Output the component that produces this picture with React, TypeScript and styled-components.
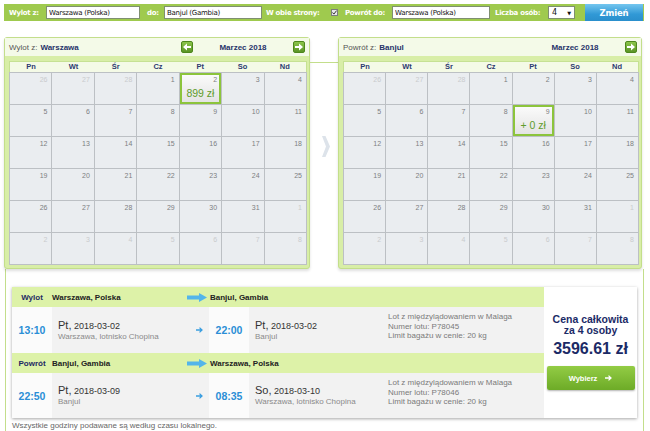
import React from "react";
import styled, { createGlobalStyle } from "styled-components";

const GlobalStyle = createGlobalStyle`
  html, body { margin: 0; padding: 0; background: #ffffff; }
  body { font-family: "Liberation Sans", Arial, sans-serif; }
  * { box-sizing: border-box; }
`;

const Page = styled.div`
  width: 650px;
  height: 431px;
  overflow: hidden;
  padding-top: 4px;
`;

/* ---------- search bar ---------- */
const SearchBar = styled.div`
  margin-left: 4px;
  width: 640px;
  height: 17px;
  padding-left: 5px;
  background: #9fca4e;
  display: flex;
  align-items: center;
  font-family: "DejaVu Sans", Verdana, sans-serif;
`;

const BarLabel = styled.span<{ $w: number; $pl?: number }>`
  flex: none;
  width: ${(p) => p.$w}px;
  padding-left: ${(p) => p.$pl ?? 0}px;
  color: #ffffff;
  font-size: 7px;
  font-weight: bold;
  letter-spacing: -0.3px;
  white-space: nowrap;
`;

const TextInput = styled.input<{ $w: number }>`
  flex: none;
  width: ${(p) => p.$w}px;
  height: 13px;
  margin: 0;
  padding: 0 0 0 2px;
  border: 1px solid #7f8f70;
  background: #ffffff;
  font-family: "DejaVu Sans", Verdana, sans-serif;
  font-size: 7px;
  letter-spacing: -0.25px;
  color: #111111;
  outline: none;
`;

const CheckBox = styled.span`
  flex: none;
  width: 7px;
  height: 7px;
  border: 1px solid #7c7c7c;
  background: #e9e9e9;
  display: flex;
  align-items: center;
  justify-content: center;
`;

const SelectBox = styled.span`
  flex: none;
  width: 27px;
  height: 13px;
  border: 1px solid #7f8f70;
  background: #ffffff;
  display: flex;
  align-items: center;
  justify-content: space-between;
  padding: 0 3px 0 3px;
  font-size: 8px;
  color: #111;
`;

const SelectCaret = styled.span`
  font-size: 5px;
  color: #111;
`;

const SubmitButton = styled.button`
  flex: none;
  margin-left: 10px;
  width: 58px;
  height: 17px;
  padding: 0;
  border: none;
  background: linear-gradient(#74c6ef, #3199d6 60%, #2a8fcc);
  color: #ffffff;
  font-family: "DejaVu Sans", Verdana, sans-serif;
  font-size: 8.5px;
  font-weight: bold;
  letter-spacing: -0.2px;
`;

/* ---------- calendars ---------- */
const CalRow = styled.div`
  display: flex;
  align-items: flex-start;
  margin-top: 16px;
  padding-left: 4px;
`;

const Panel = styled.section<{ $w: number }>`
  flex: none;
  width: ${(p) => p.$w}px;
  height: 232px;
  border: 1px solid #c3de8b;
  border-radius: 3px;
  background: #d8eea7;
  box-shadow: 0 2px 3px rgba(0, 0, 0, 0.13);
  display: flex;
  flex-direction: column;
`;

const PanelHead = styled.header`
  flex: none;
  height: 18px;
  padding: 0 4px;
  background: #f4fae8;
  display: flex;
  align-items: center;
  font-size: 8px;
  color: #555555;
`;

const HeadCity = styled.b`
  margin-left: 3px;
  color: #27336a;
`;

const MonthNav = styled.div`
  margin-left: auto;
  display: flex;
  align-items: center;
`;

const NavButton = styled.span<{ $hidden?: boolean }>`
  width: 12px;
  height: 12px;
  border: 1px solid #4d871c;
  border-radius: 2px;
  background: linear-gradient(#8cc54a, #5a9425);
  visibility: ${(p) => (p.$hidden ? "hidden" : "visible")};
  display: flex;
  align-items: center;
  justify-content: center;
`;

const MonthTitle = styled.span`
  width: 100px;
  text-align: center;
  font-size: 8px;
  font-weight: bold;
  color: #27336a;
`;

const PanelBody = styled.div`
  flex: 1;
  padding: 5px 2px 0 4px;
`;

const DayNames = styled.div`
  display: grid;
  grid-template-columns: repeat(7, 1fr);
  height: 11px;
  background: #f4fae6;
  border: 1px solid #c6e193;
  border-bottom: none;
`;

const DayName = styled.span`
  text-align: center;
  font-size: 7.5px;
  line-height: 10px;
  font-weight: bold;
  color: #2d3a70;
`;

const Grid = styled.div`
  display: grid;
  grid-template-columns: repeat(7, 1fr);
  grid-auto-rows: 32px;
  border-left: 1px solid #bcc0c4;
  border-top: 1px solid #bcc0c4;
`;

const DayCell = styled.div<{ $selected?: boolean }>`
  display: flex;
  flex-direction: column;
  border-right: 1px solid #bcc0c4;
  border-bottom: 1px solid #bcc0c4;
  background: ${(p) => (p.$selected ? "linear-gradient(#fcfcfc, #e2e2e2)" : "#eaedf0")};
  box-shadow: ${(p) => (p.$selected ? "inset 0 0 0 2px #8cc43c" : "none")};
`;

const DayNum = styled.span<{ $out?: boolean }>`
  align-self: flex-end;
  padding: 3px 4px 0 0;
  font-size: 7px;
  line-height: 8px;
  color: ${(p) => (p.$out ? "#c9cbcd" : "#7d7f82")};
`;

const DayPrice = styled.span`
  margin-top: 3px;
  text-align: center;
  font-size: 10.5px;
  line-height: 12px;
  color: #5f9c2c;
`;

const Connector = styled.div`
  flex: none;
  width: 28px;
  margin-top: 25px;
  border-top: 1px solid #c3de8b;
  padding: 73px 0 0 12px;
`;

/* ---------- results ---------- */
const Frame = styled.div`
  margin-left: 5px;
  width: 639px;
  height: 200px;
  border-left: 1px solid #c3de8b;
  border-right: 1px solid #c3de8b;
  padding: 18px 0 0 6px;
`;

const Card = styled.div`
  width: 625px;
  display: flex;
  background: #ffffff;
  box-shadow: 0 1px 3px rgba(0, 0, 0, 0.35);
`;

const Flights = styled.div`
  flex: none;
  width: 532px;
`;

const FlightHead = styled.div`
  height: 20px;
  background: #ddf2a8;
  display: flex;
  align-items: center;
  font-size: 8px;
  font-weight: bold;
`;

const HeadLabel = styled.span`
  width: 40px;
  text-align: center;
  color: #1f2b63;
`;

const HeadPlace = styled.span<{ $w?: number }>`
  width: ${(p) => (p.$w ? `${p.$w}px` : "auto")};
  color: #222222;
`;

const ArrowSvg = styled.svg`
  flex: none;
  margin-right: 3px;
`;

const FlightBody = styled.div<{ $h: number }>`
  height: ${(p) => p.$h}px;
  display: flex;
`;

const TimeCell = styled.div`
  flex: none;
  width: 40px;
  background: #fbfbfb;
  display: flex;
  align-items: center;
  justify-content: center;
  font-size: 10.5px;
  font-weight: bold;
  color: #2a8ed6;
`;

const PlaceCell = styled.div<{ $w: number }>`
  flex: none;
  width: ${(p) => p.$w}px;
  padding-left: 6px;
  background: #f2f2f2;
  display: flex;
  flex-direction: column;
  justify-content: center;
`;

const DateLine = styled.div`
  line-height: 12px;
  color: #333333;
  font-size: 9px;
  white-space: nowrap;
`;

const DayAbbr = styled.span`
  font-size: 11px;
`;

const PlaceName = styled.div`
  line-height: 10px;
  font-size: 8px;
  color: #8a8a8a;
  white-space: nowrap;
`;

const ArrowCell = styled.div`
  flex: none;
  width: 20px;
  background: #f2f2f2;
  display: flex;
  align-items: center;
  justify-content: center;
`;

const InfoCell = styled.div`
  flex: 1;
  padding-top: 5px;
  background: #f2f2f2;
  font-size: 8px;
  line-height: 9.5px;
  color: #7a7a7a;
`;

const PriceCol = styled.div`
  flex: 1;
  display: flex;
  flex-direction: column;
  align-items: center;
  padding-top: 27px;
`;

const PriceLabel = styled.div`
  text-align: center;
  font-size: 10.5px;
  line-height: 11px;
  font-weight: bold;
  color: #1b2a66;
`;

const PriceValue = styled.div`
  margin-top: 4px;
  font-size: 16px;
  line-height: 18px;
  font-weight: bold;
  color: #1b2a66;
  white-space: nowrap;
`;

const ChooseButton = styled.button`
  margin-top: 8px;
  width: 88px;
  height: 24px;
  padding: 0;
  border: none;
  border-radius: 2px;
  background: linear-gradient(#93cc45, #6dab27);
  box-shadow: 0 1px 2px rgba(0, 0, 0, 0.3);
  color: #ffffff;
  font-family: "Liberation Sans", Arial, sans-serif;
  font-size: 7.5px;
  font-weight: bold;
  display: flex;
  align-items: center;
  justify-content: center;
  gap: 8px;
`;

const Footnote = styled.div`
  margin-top: 3px;
  font-size: 8px;
  line-height: 10px;
  color: #666666;
`;

/* ---------- icons ---------- */
const NavArrow = ({ dir }: { dir: "left" | "right" }) => (
  <svg width="8" height="8" viewBox="0 0 8 8">
    <polygon
      points="0,3 4,3 4,0.5 8,4 4,7.5 4,5 0,5"
      fill="#ffffff"
      transform={dir === "left" ? "rotate(180 4 4)" : undefined}
    />
  </svg>
);

const Chevron = () => (
  <svg width="8" height="21" viewBox="0 0 8 21">
    <polygon points="0,0 3.5,0 8,10.5 3.5,21 0,21 4,10.5" fill="#dde3ea" />
  </svg>
);

const BigArrow = () => (
  <ArrowSvg width="20" height="9" viewBox="0 0 20 9">
    <polygon points="0,2.5 12,2.5 12,0 20,4.5 12,9 12,6.5 0,6.5" fill="#53b5ea" />
  </ArrowSvg>
);

const SmallArrow = ({ color }: { color: string }) => (
  <svg width="7" height="6" viewBox="0 0 7 6">
    <path d="M0 3h6M3.5 0.6L6 3 3.5 5.4" stroke={color} strokeWidth="1.3" fill="none" />
  </svg>
);

const CheckMark = () => (
  <svg width="5" height="5" viewBox="0 0 5 5">
    <path d="M0.5 2.5l1.4 1.6L4.6 0.6" stroke="#333" strokeWidth="1" fill="none" />
  </svg>
);

/* ---------- data ---------- */
type Day = { n: number; out?: boolean; price?: string };

const buildMonth = (selected: number, price: string): Day[] => {
  const days: Day[] = [26, 27, 28].map((n) => ({ n, out: true }));
  for (let i = 1; i <= 31; i++) days.push({ n: i, price: i === selected ? price : undefined });
  for (let i = 1; i <= 8; i++) days.push({ n: i, out: true });
  return days;
};

const DAY_NAMES = ["Pn", "Wt", "Śr", "Cz", "Pt", "So", "Nd"];

type CalendarProps = {
  width: number;
  label: string;
  city: string;
  showPrev: boolean;
  days: Day[];
};

const Calendar = ({ width, label, city, showPrev, days }: CalendarProps) => (
  <Panel $w={width}>
    <PanelHead>
      {label}
      <HeadCity>{city}</HeadCity>
      <MonthNav>
        <NavButton $hidden={!showPrev}>
          <NavArrow dir="left" />
        </NavButton>
        <MonthTitle>Marzec 2018</MonthTitle>
        <NavButton>
          <NavArrow dir="right" />
        </NavButton>
      </MonthNav>
    </PanelHead>
    <PanelBody>
      <DayNames>
        {DAY_NAMES.map((d) => (
          <DayName key={d}>{d}</DayName>
        ))}
      </DayNames>
      <Grid>
        {days.map((d, i) => (
          <DayCell key={i} $selected={!!d.price}>
            <DayNum $out={d.out}>{d.n}</DayNum>
            {d.price && <DayPrice>{d.price}</DayPrice>}
          </DayCell>
        ))}
      </Grid>
    </PanelBody>
  </Panel>
);

type Leg = {
  label: string;
  from: string;
  to: string;
  depTime: string;
  depDay: string;
  depDate: string;
  depPlace: string;
  arrTime: string;
  arrDay: string;
  arrDate: string;
  arrPlace: string;
  flightNo: string;
  height: number;
};

const legs: Leg[] = [
  {
    label: "Wylot",
    from: "Warszawa, Polska",
    to: "Banjul, Gambia",
    depTime: "13:10",
    depDay: "Pt,",
    depDate: "2018-03-02",
    depPlace: "Warszawa, lotnisko Chopina",
    arrTime: "22:00",
    arrDay: "Pt,",
    arrDate: "2018-03-02",
    arrPlace: "Banjul",
    flightNo: "P78045",
    height: 46,
  },
  {
    label: "Powrót",
    from: "Banjul, Gambia",
    to: "Warszawa, Polska",
    depTime: "22:50",
    depDay: "Pt,",
    depDate: "2018-03-09",
    depPlace: "Banjul",
    arrTime: "08:35",
    arrDay: "So,",
    arrDate: "2018-03-10",
    arrPlace: "Warszawa, lotnisko Chopina",
    flightNo: "P78046",
    height: 45,
  },
];

const FlightLeg = ({ leg }: { leg: Leg }) => (
  <>
    <FlightHead>
      <HeadLabel>{leg.label}</HeadLabel>
      <HeadPlace $w={135}>{leg.from}</HeadPlace>
      <BigArrow />
      <HeadPlace>{leg.to}</HeadPlace>
    </FlightHead>
    <FlightBody $h={leg.height}>
      <TimeCell>{leg.depTime}</TimeCell>
      <PlaceCell $w={137}>
        <DateLine>
          <DayAbbr>{leg.depDay}</DayAbbr> {leg.depDate}
        </DateLine>
        <PlaceName>{leg.depPlace}</PlaceName>
      </PlaceCell>
      <ArrowCell>
        <SmallArrow color="#3a9ee0" />
      </ArrowCell>
      <TimeCell>{leg.arrTime}</TimeCell>
      <PlaceCell $w={139}>
        <DateLine>
          <DayAbbr>{leg.arrDay}</DayAbbr> {leg.arrDate}
        </DateLine>
        <PlaceName>{leg.arrPlace}</PlaceName>
      </PlaceCell>
      <InfoCell>
        <div>Lot z międzylądowaniem w Malaga</div>
        <div>Numer lotu: {leg.flightNo}</div>
        <div>Limit bagażu w cenie: 20 kg</div>
      </InfoCell>
    </FlightBody>
  </>
);

export default function App() {
  return (
    <Page>
      <GlobalStyle />
      <SearchBar>
        <BarLabel $w={37}>Wylot z:</BarLabel>
        <TextInput $w={94} readOnly defaultValue="Warszawa (Polska)" />
        <BarLabel $w={24} $pl={7}>do:</BarLabel>
        <TextInput $w={98} readOnly defaultValue="Banjul (Gambia)" />
        <BarLabel $w={69} $pl={4}>W obie strony:</BarLabel>
        <CheckBox>
          <CheckMark />
        </CheckBox>
        <BarLabel $w={54} $pl={7}>Powrót do:</BarLabel>
        <TextInput $w={98} readOnly defaultValue="Warszawa (Polska)" />
        <BarLabel $w={58} $pl={5}>Liczba osób:</BarLabel>
        <SelectBox>
          4<SelectCaret>▼</SelectCaret>
        </SelectBox>
        <SubmitButton>Zmień</SubmitButton>
      </SearchBar>

      <CalRow>
        <Calendar width={306} label="Wylot z:" city="Warszawa" showPrev days={buildMonth(2, "899 zł")} />
        <Connector>
          <Chevron />
        </Connector>
        <Calendar width={304} label="Powrót z:" city="Banjul" showPrev={false} days={buildMonth(9, "+ 0 zł")} />
      </CalRow>

      <Frame>
        <Card>
          <Flights>
            {legs.map((leg) => (
              <FlightLeg key={leg.label} leg={leg} />
            ))}
          </Flights>
          <PriceCol>
            <PriceLabel>
              Cena całkowita
              <br />
              za 4 osoby
            </PriceLabel>
            <PriceValue>3596.61 zł</PriceValue>
            <ChooseButton>
              Wybierz
              <SmallArrow color="#ffffff" />
            </ChooseButton>
          </PriceCol>
        </Card>
        <Footnote>Wszystkie godziny podawane są według czasu lokalnego.</Footnote>
      </Frame>
    </Page>
  );
}
